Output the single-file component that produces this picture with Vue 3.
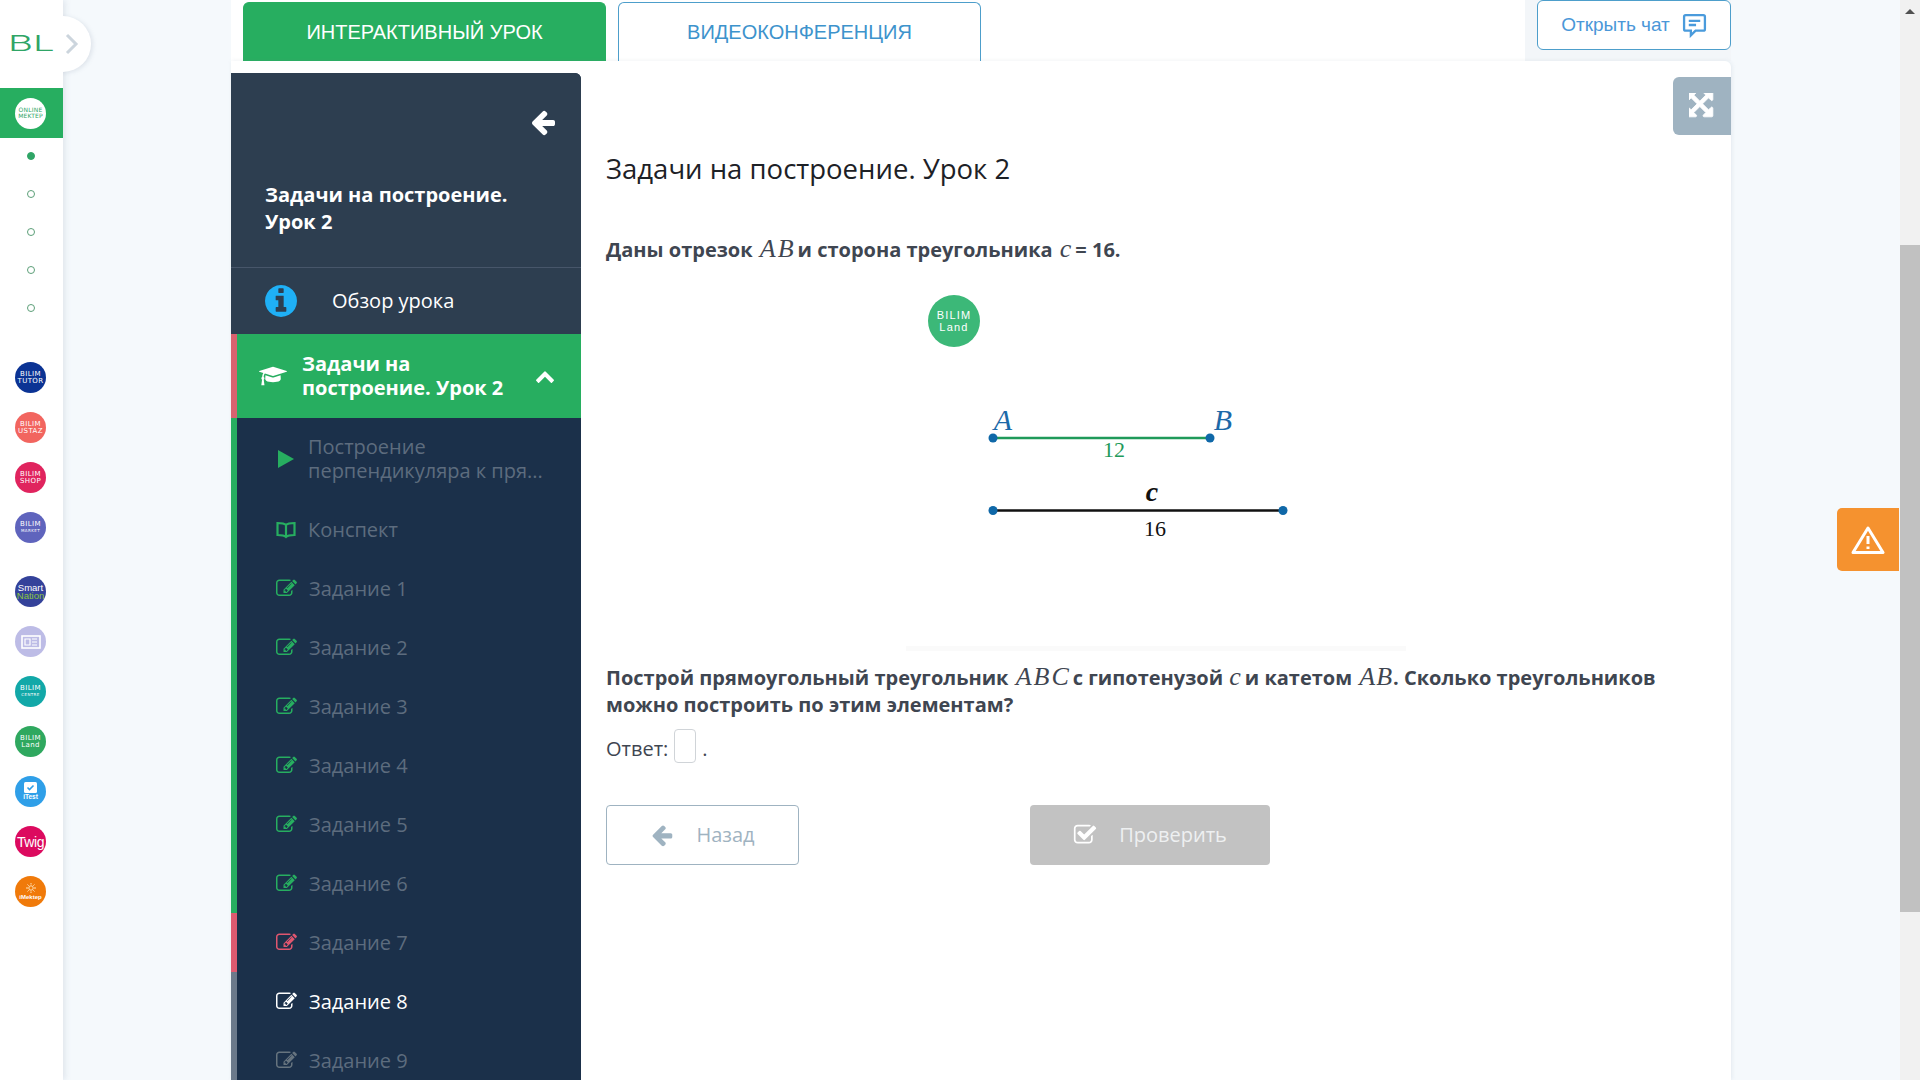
<template>
  <div class="screen">
    <aside class="rail">
      <div class="brand">BL</div>
      <div class="brand-toggle">
        <svg width="14" height="22" viewBox="0 0 14 22"><path d="M2 2l9 9-9 9" fill="none" stroke="#ccd5dd" stroke-width="3" /></svg>
      </div>
      <div class="rail-active">
        <div class="logo logo-white"><span>ONLINE</span><span>MEKTEP</span></div>
      </div>
      <div class="dots">
        <i v-for="n in 5" :key="n" class="dot" :class="{ filled: n === 1 }"></i>
      </div>
      <div class="logos">
        <div v-for="(group, g) in logoGroups" :key="g" class="logo-group">
          <div v-for="logo in group" :key="logo.color" class="logo" :class="logo.cls" :style="{ background: logo.color }">
            <svg v-if="logo.icon === 'paper'" width="20" height="14" viewBox="0 0 20 14">
              <rect x="1" y="1" width="18" height="12" fill="none" stroke="#fff" stroke-width="1.6" />
              <path d="M4 4h5v6H4zM11 4h5M11 7h5M11 10h5" fill="none" stroke="#fff" stroke-width="1.2" />
            </svg>
            <svg v-if="logo.icon === 'test'" width="13" height="11" viewBox="0 0 13 11">
              <rect width="13" height="11" rx="1.5" fill="#fff" />
              <path d="M3.500 5.500l2 2 4-4" fill="none" stroke="#2f9fe8" stroke-width="1.600" />
            </svg>
            <svg v-if="logo.icon === 'sun'" width="12" height="10" viewBox="0 0 12 10" fill="none" stroke="#ffe3b8" stroke-width="1">
              <circle cx="6" cy="5" r="2.200" />
              <path d="M6 0v1.500M6 8.500V10M1 5h2M9 5h2M2.500 1.500l1.200 1.200M9.500 1.500L8.300 2.700M2.500 8.500l1.200-1.200M9.500 8.500L8.300 7.300" />
            </svg>
            <span v-if="logo.a">{{ logo.a }}</span>
            <span v-if="logo.b" :class="logo.bCls">{{ logo.b }}</span>
          </div>
        </div>
      </div>
    </aside>

    <div class="page">
      <div class="column">
        <header class="top">
          <div class="tabs">
            <div class="tab tab-on">ИНТЕРАКТИВНЫЙ УРОК</div>
            <div class="tab">ВИДЕОКОНФЕРЕНЦИЯ</div>
          </div>
          <div class="chat-zone">
            <button class="chat">
              Открыть чат
              <svg width="25" height="25" viewBox="0 0 24 24" fill="none" stroke="#4a9bdc" stroke-width="2.200">
                <path d="M3.500 2h17a1.500 1.500 0 0 1 1.500 1.500v12a1.500 1.500 0 0 1-1.500 1.500H13l-4.500 4.500V17h-5A1.500 1.500 0 0 1 2 15.500v-12A1.500 1.500 0 0 1 3.500 2z" />
                <path d="M6.500 7.500h11M6.500 11.500h7" />
              </svg>
            </button>
          </div>
        </header>

        <section class="panel">
          <nav class="side">
            <div class="side-head">
              <div class="back-row">
                <svg width="28" height="28" viewBox="0 0 1792 1792"><path fill="#fff" :d="icons.arrow" /></svg>
              </div>
              <div class="side-title">Задачи на построение. Урок 2</div>
            </div>
            <div class="overview">
              <svg width="32" height="32" viewBox="128 128 1536 1536"><path fill="#1fb0f6" :d="icons.info" /></svg>
              <span>Обзор урока</span>
            </div>
            <div class="lesson">
              <svg width="28" height="22" viewBox="0 0 2304 1792"><path fill="#fff" :d="icons.cap" /></svg>
              <span class="lesson-name">Задачи на построение. Урок 2</span>
              <svg width="20" height="20" viewBox="0 0 1792 1792"><path fill="#fff" :d="icons.chevron" /></svg>
            </div>
            <ul class="steps">
              <li class="step step-first">
                <svg class="ico ok" width="20" height="20" viewBox="0 0 20 20"><path d="M2 1l16 9-16 9z" /></svg>
                <div class="step-long">
                  <span>Построение</span>
                  <span>перпендикуляра к пря...</span>
                </div>
              </li>
              <li class="step">
                <svg class="ico ok book" width="20" height="18" viewBox="0 0 20 18">
                  <path d="M10 4C8.500 2.500 5 2 1.500 2v12c3.500 0 7 .5 8.500 2 1.500-1.500 5-2 8.500-2V2C15 2 11.500 2.500 10 4zM10 4v12" />
                </svg>
                <span>Конспект</span>
              </li>
              <li v-for="task in tasks" :key="task.n" class="step" :class="task.state">
                <svg class="ico" width="21" height="21" viewBox="0 0 1792 1792"><path :d="icons.edit" /></svg>
                <span>Задание {{ task.n }}</span>
              </li>
            </ul>
          </nav>

          <main class="lesson-body">
            <h1>Задачи на построение. Урок 2</h1>
            <p class="bold">
              Даны отрезок <var class="m">AB</var>и сторона треугольника <var class="m">c</var>= 16.
            </p>
            <figure class="figure">
              <svg width="500" height="361" viewBox="0 0 500 361">
                <circle cx="48" cy="31" r="26" fill="#3cb878" />
                <text class="wm" x="48" y="29" text-anchor="middle">BILIM</text>
                <text class="wm" x="48" y="41" text-anchor="middle">Land</text>

                <line x1="87" y1="148" x2="304" y2="148" stroke="#1f9a5a" stroke-width="2.500" />
                <line x1="87" y1="220.500" x2="377" y2="220.500" stroke="#111" stroke-width="2.500" />
                <g fill="#0f68a8">
                  <circle cx="87" cy="148" r="4.500" />
                  <circle cx="304" cy="148" r="4.500" />
                  <circle cx="87" cy="220.500" r="4.500" />
                  <circle cx="377" cy="220.500" r="4.500" />
                </g>
                <text class="lb pt" x="97" y="140" text-anchor="middle">A</text>
                <text class="lb pt" x="317" y="140" text-anchor="middle">B</text>
                <text class="lb num gr" x="208" y="167" text-anchor="middle">12</text>
                <text class="lb side-c" x="246" y="211" text-anchor="middle">c</text>
                <text class="lb num" x="249" y="246" text-anchor="middle">16</text>
              </svg>
            </figure>
            <p class="bold">
              Построй прямоугольный треугольник <var class="m">ABC</var>с гипотенузой <var class="m m-tight">c</var>и катетом <var class="m m-end">AB</var>. Сколько треугольников можно построить по этим элементам?
            </p>
            <div class="answer">
              <span>Ответ:</span>
              <input type="text" aria-label="Ответ" />
              <span>.</span>
            </div>
            <div class="actions">
              <button class="btn btn-back">
                <svg width="24" height="24" viewBox="0 0 1792 1792"><path fill="#9fb3c1" :d="icons.arrow" /></svg>
                <span>Назад</span>
              </button>
              <button class="btn btn-check">
                <svg width="24" height="24" viewBox="0 0 1792 1792"><path fill="#fff" :d="icons.check" /></svg>
                <span>Проверить</span>
              </button>
            </div>
          </main>

          <button class="expand" aria-label="Развернуть">
            <svg width="26" height="26" viewBox="128 128 1536 1536"><path fill="#fff" stroke="#fff" stroke-width="50" :d="icons.expand" /></svg>
          </button>
        </section>
      </div>

      <button class="report" aria-label="Сообщить об ошибке">
        <svg width="34" height="30" viewBox="0 0 34 30" fill="none" stroke="#fff" stroke-width="3" stroke-linejoin="round">
          <path d="M17 3L32 27.500H2z" />
          <path d="M17 11v8M17 21.500v2.500" />
        </svg>
      </button>
    </div>

    <div class="scrollbar">
      <i class="scroll-up"></i>
      <i class="scroll-thumb"></i>
    </div>
  </div>
</template>

<script setup>
const icons = {
  arrow: 'M1664 896v128q0 53-32.500 90.500t-84.500 37.500h-704l293 294q38 36 38 90t-38 90l-75 76q-37 37-90 37-52 0-91-37l-651-652q-37-37-37-90 0-52 37-91l651-650q38-38 91-38 52 0 90 38l75 74q38 38 38 91t-38 91l-293 293h704q52 0 84.500 37.500t32.500 90.500z',
  info: 'M1152 1376v-160q0-14-9-23t-23-9h-96v-512q0-14-9-23t-23-9h-320q-14 0-23 9t-9 23v160q0 14 9 23t23 9h96v320h-96q-14 0-23 9t-9 23v160q0 14 9 23t23 9h448q14 0 23-9t9-23zm-128-896v-160q0-14-9-23t-23-9h-192q-14 0-23 9t-9 23v160q0 14 9 23t23 9h192q14 0 23-9t9-23zm640 416q0 209-103 385.500t-279.500 279.500-385.500 103-385.500-103-279.500-279.500-103-385.500 103-385.500 279.500-279.500 385.500-103 385.500 103 279.500 279.500 103 385.500z',
  cap: 'M1774 836l18 316q4 69-82 128t-235 93.500-323 34.500-323-34.500-235-93.500-82-128l18-316 574 181q22 7 48 7t48-7zm530-324q0 23-22 31l-1120 352q-4 1-10 1t-10-1l-652-206q-43 34-71 111.500t-34 178.500q63 36 63 109 0 69-58 107l58 433q2 14-8 25-9 11-24 11h-192q-15 0-24-11-10-11-8-25l58-433q-58-38-58-107 0-73 65-111 11-207 98-330l-333-104q-22-8-22-31t22-31l1120-352q4-1 10-1t10 1l1120 352q22 8 22 31z',
  chevron: 'M1683 1331l-166 165q-19 19-45 19t-45-19l-531-531-531 531q-19 19-45 19t-45-19l-166-165q-19-19-19-45.500t19-45.500l742-741q19-19 45-19t45 19l742 741q19 19 19 45.500t-19 45.500z',
  edit: 'M888 1184l116-116-152-152-116 116v56h96v96h56zm440-720q-16-16-33 1l-350 350q-17 17-1 33t33-1l350-350q17-17 1-33zm80 594v190q0 119-84.500 203.500t-203.500 84.500h-832q-119 0-203.500-84.500t-84.500-203.500v-832q0-119 84.500-203.500t203.500-84.500h832q63 0 117 25 15 7 18 23 3 17-9 29l-49 49q-14 14-32 8-23-6-45-6h-832q-66 0-113 47t-47 113v832q0 66 47 113t113 47h832q66 0 113-47t47-113v-126q0-13 9-22l64-64q15-15 35-7t20 29zm-96-738l288 288-672 672h-288v-288zm444 132l-92 92-288-288 92-92q28-28 68-28t68 28l152 152q28 28 28 68t-28 68z',
  check: 'M1472 930v318q0 119-84.500 203.500t-203.500 84.500h-832q-119 0-203.500-84.500t-84.500-203.500v-832q0-119 84.500-203.500t203.500-84.500h832q63 0 117 25 15 7 18 23 3 17-9 29l-49 49q-10 10-23 10-3 0-9-2-23-6-45-6h-832q-66 0-113 47t-47 113v832q0 66 47 113t113 47h832q66 0 113-47t47-113v-254q0-13 9-22l64-64q10-10 23-10 6 0 12 3 20 8 20 29zm231-489l-814 814q-24 24-57 24t-57-24l-430-430q-24-24-24-57t24-57l110-110q24-24 57-24t57 24l263 263 647-647q24-24 57-24t57 24l110 110q24 24 24 57t-24 57z',
  expand: 'M1283 413l-355 355 355 355 144-144q29-31 70-14 39 17 39 59v448q0 26-19 45t-45 19h-448q-42 0-59-40-17-39 14-69l144-144-355-355-355 355 144 144q31 30 14 69-17 40-59 40h-448q-26 0-45-19t-19-45v-448q0-42 40-59 39-17 69 14l144 144 355-355-355-355-144 144q-19 19-45 19-12 0-24-5-40-17-40-59v-448q0-26 19-45t45-19h448q42 0 59 40 17 39-14 69l-144 144 355 355 355-355-144-144q-31-30-14-69 17-40 59-40h448q26 0 45 19t19 45v448q0 42-39 59-13 5-25 5-26 0-45-19z'
}

const logoGroups = [
  [
    { a: 'BILIM', b: 'TUTOR', color: '#0b3394' },
    { a: 'BILIM', b: 'USTAZ', color: '#f2655f' },
    { a: 'BILIM', b: 'SHOP', color: '#e0245e' },
    { a: 'BILIM', b: 'MARKET', color: '#5f64bd', bCls: 'tiny' }
  ],
  [
    { a: 'Smart', b: 'Nation', color: '#34429a', cls: 'logo-smart', bCls: 'lime' },
    { color: '#bdbce6', icon: 'paper' },
    { a: 'BILIM', b: 'CENTRE', color: '#12a8a8', bCls: 'tiny' },
    { a: 'BILIM', b: 'Land', color: '#2fa85f' },
    { a: 'iTest', color: '#2f9fe8', icon: 'test', cls: 'logo-test' },
    { a: 'Twig', color: '#dc0a5f', cls: 'logo-twig' },
    { a: 'iMektep', color: '#f07a0a', icon: 'sun', cls: 'logo-mektep' }
  ]
]

const tasks = [
  { n: 1, state: 'ok' },
  { n: 2, state: 'ok' },
  { n: 3, state: 'ok' },
  { n: 4, state: 'ok' },
  { n: 5, state: 'ok' },
  { n: 6, state: 'ok' },
  { n: 7, state: 'bad' },
  { n: 8, state: 'current' },
  { n: 9, state: 'todo' }
]
</script>

<style>
html,
body {
  margin: 0;
  height: 100%;
  overflow: hidden;
}
</style>

<style scoped>
.screen {
  display: flex;
  height: 100vh;
  overflow: hidden;
  font-family: 'Open Sans', 'Liberation Sans', sans-serif;
  background: #f5f9fc;
  color: #3f4651;
}

/* left rail */
.rail {
  position: relative;
  z-index: 2;
  width: 63px;
  flex: none;
  background: #fff;
  box-shadow: 2px 0 6px rgba(120, 140, 160, 0.18);
}
.brand {
  height: 88px;
  box-sizing: border-box;
  padding: 27px 0 0 8px;
  font-family: Inter, 'Liberation Sans', sans-serif;
  font-weight: 300;
  font-size: 22px;
  line-height: 32px;
  color: #2fa566;
  transform-origin: 8px 44px;
  transform: scaleX(1.75);
  white-space: nowrap;
}
.brand-toggle {
  position: absolute;
  left: 35px;
  top: 16px;
  width: 56px;
  height: 56px;
  box-sizing: border-box;
  display: flex;
  align-items: center;
  justify-content: flex-end;
  padding-right: 12px;
  border-radius: 50%;
  background: #fff;
  box-shadow: 2px 1px 4px rgba(120, 140, 160, 0.18);
  clip-path: inset(-8px -8px -8px 28px);
}
.rail-active {
  height: 50px;
  box-sizing: border-box;
  padding-right: 2px;
  background: #27ae60;
  display: flex;
  align-items: center;
  justify-content: center;
}
.dots {
  display: flex;
  flex-direction: column;
  align-items: center;
  gap: 30px;
  padding: 14px 2px 0 0;
}
.dot {
  width: 8px;
  height: 8px;
  box-sizing: border-box;
  border: 1.5px solid #5c9f78;
  border-radius: 50%;
}
.dot.filled {
  background: #2fa566;
  border-color: #2fa566;
}
.logos {
  display: flex;
  flex-direction: column;
  gap: 33px;
  padding: 50px 2px 0 0;
}
.logo-group {
  display: flex;
  flex-direction: column;
  align-items: center;
  gap: 19px;
}
.logo {
  width: 31px;
  height: 31px;
  border-radius: 50%;
  display: flex;
  flex-direction: column;
  align-items: center;
  justify-content: center;
  color: #fff;
  font-family: 'DejaVu Sans', sans-serif;
  font-size: 7px;
  line-height: 6.5px;
  letter-spacing: 0.4px;
}
.logo-white {
  background: #fff;
  color: #2fa566;
  font-size: 6px;
  letter-spacing: 0.2px;
  line-height: 6.5px;
}
.logo .tiny {
  font-size: 4px;
}
.logo .lime {
  color: #8bc63f;
}
.logo-smart {
  font-family: 'Liberation Sans', sans-serif;
  font-size: 9.5px;
  line-height: 8px;
  letter-spacing: 0;
}
.logo-test {
  font-family: 'Liberation Sans', sans-serif;
  font-size: 6.5px;
  font-weight: 700;
  line-height: 8px;
  letter-spacing: 0;
}
.logo-twig {
  font-family: 'Liberation Sans', sans-serif;
  font-size: 14px;
  letter-spacing: -0.4px;
  line-height: 14px;
}
.logo-mektep {
  font-family: 'Liberation Sans', sans-serif;
  font-size: 6px;
  font-weight: 700;
  letter-spacing: 0;
  line-height: 8px;
}

/* page */
.page {
  position: relative;
  flex: 1;
  min-width: 0;
  overflow: hidden;
}
.column {
  width: 1500px;
  height: 100%;
  margin-left: 168px;
  display: flex;
  flex-direction: column;
}
.top {
  display: flex;
  height: 61px;
  flex: none;
}
.tabs {
  flex: 1;
  background: #fff;
  display: flex;
  gap: 12px;
  padding: 2px 0 0 12px;
}
.tab {
  width: 363px;
  box-sizing: border-box;
  display: flex;
  align-items: center;
  justify-content: center;
  border: 1px solid #4d9ecb;
  border-bottom: 0;
  border-radius: 6px 6px 0 0;
  font-family: 'Liberation Sans', sans-serif;
  font-size: 20px;
  color: #3d93cc;
}
.tab-on {
  background: #27ae60;
  border-color: #27ae60;
  color: #fff;
}
.chat-zone {
  width: 194px;
  padding-left: 12px;
  background: #f3f6f9;
}
.chat {
  width: 194px;
  height: 50px;
  display: flex;
  align-items: center;
  justify-content: center;
  gap: 12px;
  padding: 0;
  background: #fff;
  border: 1px solid #4d9ecb;
  border-radius: 6px;
  font-family: 'Liberation Sans', sans-serif;
  font-size: 19px;
  color: #4a97d8;
}

.panel {
  position: relative;
  flex: 1;
  min-height: 0;
  display: flex;
  background: #fff;
  border-radius: 0 6px 0 0;
  box-shadow: 1px 0 4px rgba(120, 140, 160, 0.14);
}

/* course sidebar */
.side {
  width: 350px;
  flex: none;
  margin-top: 12px;
  background: #1b304a;
  border-radius: 0 6px 0 0;
  color: #fff;
}
.side-head {
  height: 195px;
  box-sizing: border-box;
  padding: 35px 24px 0 34px;
  background: #2d3e50;
  border-radius: 0 6px 0 0;
  border-bottom: 1px solid #47566a;
}
.back-row {
  display: flex;
  justify-content: flex-end;
  height: 73px;
}
.side-title {
  width: 260px;
  font-weight: 700;
  font-size: 20px;
  line-height: 27px;
}
.overview {
  height: 66px;
  box-sizing: border-box;
  display: flex;
  align-items: center;
  gap: 35px;
  padding: 0 0 1px 34px;
  background: #2d3e50;
  font-size: 20px;
}
.lesson {
  height: 84px;
  box-sizing: border-box;
  display: flex;
  align-items: center;
  padding: 0 26px 0 22px;
  background: #27ae60;
  border-left: 6px solid #d9626f;
}
.lesson-name {
  width: 215px;
  margin: 0 auto 0 15px;
  font-weight: 700;
  font-size: 20px;
  line-height: 24px;
}
.steps {
  list-style: none;
  margin: 0;
  padding: 0;
}
.step {
  height: 59px;
  box-sizing: border-box;
  display: flex;
  align-items: center;
  gap: 12px;
  padding-left: 39px;
  border-left: 6px solid #27ae60;
  font-size: 20px;
  color: #5d6c7e;
}
.step-first {
  height: 82px;
}
.step-long {
  display: flex;
  flex-direction: column;
  line-height: 24px;
  white-space: nowrap;
}
.ico {
  flex: none;
  fill: currentColor;
}
.ico.ok,
.step.ok .ico {
  color: #27ae60;
}
.ico.book {
  fill: none;
  stroke: currentColor;
  stroke-width: 2.2;
}
.step.bad {
  border-left-color: #df5a70;
}
.step.bad .ico {
  color: #e0566f;
}
.step.current {
  border-left-color: #6c7a8b;
  color: #fff;
}
.step.todo {
  border-left-color: #6c7a8b;
}
.step.todo .ico {
  color: #67747f;
}

/* lesson content */
.lesson-body {
  flex: 1;
  min-width: 0;
  padding: 90px 25px 0;
}
h1 {
  margin: 0 0 49px;
  font-weight: 400;
  font-size: 27.5px;
  line-height: 36px;
  color: #1d2126;
}
.bold {
  margin: 0;
  font-weight: 700;
  font-size: 20px;
  line-height: 27px;
}
.m {
  font-family: 'Liberation Serif', serif;
  font-style: italic;
  font-weight: 400;
  font-size: 26px;
  line-height: 20px;
  letter-spacing: 2px;
  margin: 0 2px 0 2px;
}
.m-tight {
  margin-left: 1px;
}
.m-end {
  letter-spacing: 1px;
  margin-right: 0;
}
.figure {
  width: 500px;
  height: 361px;
  margin: 27px auto 13px;
  border-bottom: 5px solid #fafafa;
  box-sizing: border-box;
}
.figure svg {
  display: block;
  overflow: visible;
}
.wm {
  font-family: 'Liberation Sans', sans-serif;
  font-size: 11px;
  letter-spacing: 1.2px;
  fill: #fff;
}
.lb {
  font-family: 'Liberation Serif', serif;
}
.pt {
  font-style: italic;
  font-size: 30px;
  fill: #1c69a8;
}
.num {
  font-size: 22px;
  fill: #111;
}
.gr {
  fill: #1f9a5a;
}
.side-c {
  font-style: italic;
  font-weight: 700;
  font-size: 28px;
  fill: #111;
}
.answer {
  display: flex;
  align-items: center;
  gap: 6px;
  margin-top: 11px;
  font-size: 20px;
  line-height: 27px;
}
.answer span {
  padding-top: 4px;
}
.answer input {
  width: 22px;
  height: 34px;
  box-sizing: border-box;
  padding: 0;
  border: 1px solid #d0d4d8;
  border-radius: 4px;
  background: #fff;
}
.actions {
  display: flex;
  gap: 231px;
  margin-top: 42px;
}
.btn {
  height: 60px;
  box-sizing: border-box;
  display: flex;
  align-items: center;
  justify-content: center;
  gap: 22px;
  border-radius: 4px;
  font-family: 'Open Sans', sans-serif;
  font-size: 20px;
}
.btn span {
  padding-bottom: 2px;
}
.btn-back {
  width: 193px;
  background: #fff;
  border: 1px solid #9fb3c1;
  color: #9fb3c1;
}
.btn-check {
  width: 240px;
  background: #c2c2c2;
  border: 0;
  color: #eef0f1;
}

.expand {
  position: absolute;
  right: 0;
  top: 16px;
  width: 58px;
  height: 58px;
  display: flex;
  align-items: center;
  justify-content: center;
  padding: 0;
  border: 0;
  border-radius: 6px 0 0 6px;
  background: #9fb3c1;
}
.report {
  position: absolute;
  right: 1px;
  top: 508px;
  width: 62px;
  height: 63px;
  display: flex;
  align-items: center;
  justify-content: center;
  padding: 0;
  border: 0;
  border-radius: 5px 0 0 5px;
  background: #f5922f;
}

/* page scrollbar */
.scrollbar {
  position: relative;
  width: 20px;
  flex: none;
  background: #f1f1f1;
}
.scroll-up {
  position: absolute;
  left: 5px;
  top: 9px;
  border: 5px solid transparent;
  border-top: 0;
  border-bottom-color: #505050;
}
.scroll-thumb {
  position: absolute;
  left: 0;
  right: 0;
  top: 245px;
  height: 667px;
  background: #c1c1c1;
}
</style>
